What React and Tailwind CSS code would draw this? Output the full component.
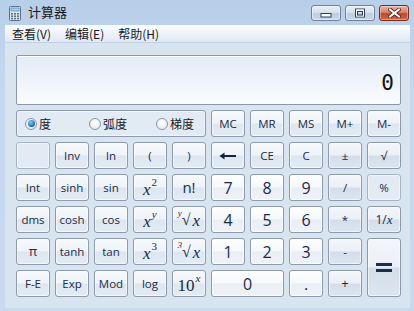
import React from "react";

const base =
  "flex items-center justify-center rounded-[3px] border text-[#1b2b44] font-['Open_Sans',sans-serif] leading-none select-none";
const variants = {
  fn: "border-[#8e9aab] bg-[linear-gradient(180deg,#f6f9fc_0%,#eef3f9_48%,#dde6f0_52%,#e4ebf4_100%)] shadow-[inset_0_0_0_1px_rgba(255,255,255,0.55)]",
  num: "border-[#8e9aab] bg-[linear-gradient(180deg,#fdfeff_0%,#f5f8fb_48%,#e9eef5_52%,#eff3f8_100%)] shadow-[inset_0_0_0_1px_rgba(255,255,255,0.7)]",
  op: "border-[#8e9aab] bg-[linear-gradient(180deg,#f3f6fa_0%,#ebf0f7_48%,#d4deea_52%,#dce5ef_100%)] shadow-[inset_0_0_0_1px_rgba(255,255,255,0.55)]",
  flat: "border-[#a9b4c2] bg-[#e3eaf3] shadow-[inset_0_0_0_1px_rgba(255,255,255,0.5)]",
};

function Btn({ v = "fn", className = "", children }) {
  return <div className={`${base} ${variants[v]} ${className}`}>{children}</div>;
}

const serif = "font-['Liberation_Serif',serif]";

function Sup({ base: b, sup, italicBase = true, italicSup = false }) {
  return (
    <span className={`${serif} flex items-start text-[#1b2b44]`}>
      <span className={`${italicBase ? "italic" : ""} text-[17px] leading-none mt-[3px]`}>{b}</span>
      <span className={`${italicSup ? "italic" : ""} text-[11px] leading-none -mt-[1px] ml-[1px]`}>{sup}</span>
    </span>
  );
}

function Root({ idx }) {
  return (
    <span className={`${serif} flex items-start text-[#1b2b44] leading-none`}>
      <span className="text-[9px] italic leading-none -mt-[1px]">{idx}</span>
      <span className="text-[16px] leading-none mt-[2px]">√</span>
      <span className="italic text-[17px] leading-none ml-[2px] mt-[2px]">x</span>
    </span>
  );
}

function CalcIcon() {
  return (
    <svg width="12" height="15" viewBox="0 0 12 15">
      <rect x="0.5" y="0.5" width="11" height="14" rx="1" fill="#dfe6ee" stroke="#5b6f88" />
      <rect x="2" y="2" width="8" height="3" fill="#9fd0f0" stroke="#4d7fb3" strokeWidth="0.6" />
      {[0, 1, 2].map((r) =>
        [0, 1, 2].map((c) => (
          <rect key={`${r}${c}`} x={2 + c * 3} y={7 + r * 2.4} width="2" height="1.6" fill="#607389" />
        ))
      )}
    </svg>
  );
}

function Radio({ checked }) {
  return (
    <span className="w-[12px] h-[12px] rounded-full border border-[#8b97a6] bg-[radial-gradient(circle_at_50%_35%,#ffffff,#dfe5ec)] flex items-center justify-center">
      {checked && (
        <span className="w-[7px] h-[7px] rounded-full bg-[radial-gradient(circle_at_40%_35%,#7fd0ff,#1763b3_70%,#0b3f7e)]" />
      )}
    </span>
  );
}

function CaptionBtn({ kind }) {
  if (kind === "close") {
    return (
      <div className="w-[30px] h-[16px] rounded-[3px] border border-[#7a2a1e] bg-[linear-gradient(180deg,#eab1a3_0%,#d8826d_45%,#c4452b_55%,#d0684e_100%)] flex items-center justify-center shadow-[inset_0_0_0_1px_rgba(255,255,255,0.35)]">
        <svg width="13" height="10" viewBox="0 0 13 10">
          <path d="M2 1.5 L11 8.5 M11 1.5 L2 8.5" stroke="#4a1a12" strokeWidth="3.6" strokeLinecap="square" />
          <path d="M2 1.5 L11 8.5 M11 1.5 L2 8.5" stroke="#ffffff" strokeWidth="2" strokeLinecap="square" />
        </svg>
      </div>
    );
  }
  return (
    <div className="w-[30px] h-[16px] rounded-[3px] border border-[#6f819a] bg-[linear-gradient(180deg,#e8eff8_0%,#d5e1ef_45%,#bccde3_55%,#c9d8ea_100%)] flex items-center justify-center shadow-[inset_0_0_0_1px_rgba(255,255,255,0.45)]">
      {kind === "min" ? (
        <svg width="12" height="10" viewBox="0 0 12 10">
          <rect x="1" y="5.5" width="10" height="3.5" fill="#ffffff" stroke="#2e3f57" strokeWidth="1" />
        </svg>
      ) : (
        <svg width="12" height="10" viewBox="0 0 12 10">
          <rect x="1.5" y="1" width="9" height="8" fill="none" stroke="#2e3f57" strokeWidth="1" />
          <rect x="2.5" y="2" width="7" height="6" fill="none" stroke="#ffffff" strokeWidth="1" />
          <rect x="3.5" y="3.5" width="5" height="3.5" fill="none" stroke="#2e3f57" strokeWidth="1" />
        </svg>
      )}
    </div>
  );
}

export default function App() {
  const fnText = "text-[11.5px]";
  const numText = "text-[16px]";
  return (
    <div className="w-[414px] h-[311px] overflow-hidden flex flex-col bg-[linear-gradient(180deg,#b8cfe9_0%,#c6d8ee_30%,#c9daee_100%)] font-['Noto_Sans_CJK_SC',sans-serif]">
      {/* title bar */}
      <div className="h-[25px] flex items-start shrink-0">
        <div className="pl-[9px] pt-[6px]">
          <CalcIcon />
        </div>
        <div className="pl-[7px] pt-[4px] text-[13px] text-[#1a1a1a] leading-[16px]">计算器</div>
        <div className="ml-auto flex gap-[4px] pt-[5px] pr-[5px]">
          <CaptionBtn kind="min" />
          <CaptionBtn kind="max" />
          <CaptionBtn kind="close" />
        </div>
      </div>
      {/* body */}
      <div className="mx-[5px] mr-[4px] flex-1 flex flex-col">
        <div className="h-[18px] flex items-center bg-[linear-gradient(180deg,#fbfdff_0%,#eef3fa_50%,#dfe8f4_100%)] border-b border-[#c3d1e3] text-[12px] text-[#1a1a1a]">
          <span className="px-[7px]">查看(V)</span>
          <span className="px-[7px]">编辑(E)</span>
          <span className="px-[7px]">帮助(H)</span>
        </div>
        <div className="flex-1 bg-[#d9e4f1] pt-[12px] pl-[11px] flex flex-col gap-[5px]">
          <div className="w-[385px] h-[50px] rounded-[2px] border border-[#8a98aa] bg-[linear-gradient(180deg,#e4ecf7_0%,#eef3fa_50%,#fbfcfe_100%)] flex items-start justify-end pr-[6px] pt-[17px] shadow-[inset_0_1px_0_#ffffff]">
            <span className="font-['DejaVu_Sans_Mono',monospace] text-[21px] leading-none text-[#111]">0</span>
          </div>
          <div className="grid grid-cols-[repeat(10,34px)] grid-rows-[repeat(6,27px)] gap-[5px]">
            <div className="col-span-5 rounded-[3px] border border-[#8e9aab] bg-[#e2eaf4] shadow-[inset_0_0_0_1px_rgba(255,255,255,0.5)] flex items-center text-[12px] text-[#1a1a1a]">
              <div className="flex items-center gap-[2px] pl-[8px] w-[72px]">
                <Radio checked />
                <span>度</span>
              </div>
              <div className="flex items-center gap-[2px] w-[67px]">
                <Radio />
                <span>弧度</span>
              </div>
              <div className="flex items-center gap-[2px]">
                <Radio />
                <span>梯度</span>
              </div>
            </div>
            <Btn className={fnText}>MC</Btn>
            <Btn className={fnText}>MR</Btn>
            <Btn className={fnText}>MS</Btn>
            <Btn className={fnText}>M+</Btn>
            <Btn className={fnText}>M-</Btn>

            <Btn v="flat" />
            <Btn className={fnText}>Inv</Btn>
            <Btn className={fnText}>ln</Btn>
            <Btn className={fnText}>(</Btn>
            <Btn className={fnText}>)</Btn>
            <Btn>
              <svg width="18" height="8" viewBox="0 0 18 8">
                <path d="M4.5 4 H17" stroke="#13233b" strokeWidth="2" />
                <path d="M0.5 4 L5.5 0.5 L5.5 7.5 Z" fill="#13233b" />
              </svg>
            </Btn>
            <Btn className={fnText}>CE</Btn>
            <Btn className={fnText}>C</Btn>
            <Btn v="op" className={fnText}>±</Btn>
            <Btn v="op" className={fnText}>√</Btn>

            <Btn className={fnText}>Int</Btn>
            <Btn className={fnText}>sinh</Btn>
            <Btn className={fnText}>sin</Btn>
            <Btn><Sup base="x" sup="2" /></Btn>
            <Btn className="text-[15px]">n!</Btn>
            <Btn v="num" className={numText}>7</Btn>
            <Btn v="num" className={numText}>8</Btn>
            <Btn v="num" className={numText}>9</Btn>
            <Btn v="op" className={fnText}>/</Btn>
            <Btn v="flat" className={fnText}>%</Btn>

            <Btn className={fnText}>dms</Btn>
            <Btn className={fnText}>cosh</Btn>
            <Btn className={fnText}>cos</Btn>
            <Btn><Sup base="x" sup="y" italicSup /></Btn>
            <Btn><Root idx="y" /></Btn>
            <Btn v="num" className={numText}>4</Btn>
            <Btn v="num" className={numText}>5</Btn>
            <Btn v="num" className={numText}>6</Btn>
            <Btn v="op" className={fnText}>*</Btn>
            <Btn v="op">
              <span className="text-[12px] font-['Open_Sans',sans-serif]">1/</span>
              <span className={`${serif} italic text-[13px]`}>x</span>
            </Btn>

            <Btn className="text-[13px]">π</Btn>
            <Btn className={fnText}>tanh</Btn>
            <Btn className={fnText}>tan</Btn>
            <Btn><Sup base="x" sup="3" /></Btn>
            <Btn><Root idx="3" /></Btn>
            <Btn v="num" className={numText}>1</Btn>
            <Btn v="num" className={numText}>2</Btn>
            <Btn v="num" className={numText}>3</Btn>
            <Btn v="op" className={fnText}>-</Btn>
            <Btn v="op" className="row-span-2">
              <svg width="16" height="9" viewBox="0 0 16 9">
                <rect x="0" y="0" width="16" height="3" fill="#1b2f4d" />
                <rect x="0" y="6" width="16" height="3" fill="#1b2f4d" />
              </svg>
            </Btn>

            <Btn className={fnText}>F-E</Btn>
            <Btn className={fnText}>Exp</Btn>
            <Btn className={fnText}>Mod</Btn>
            <Btn className={fnText}>log</Btn>
            <Btn><Sup base="10" sup="x" italicBase={false} italicSup /></Btn>
            <Btn v="num" className={`col-span-2 ${numText}`}>0</Btn>
            <Btn v="num" className={numText}>.</Btn>
            <Btn v="op" className="text-[13px]">+</Btn>
          </div>
        </div>
      </div>
      <div className="h-[3px] shrink-0" />
    </div>
  );
}
